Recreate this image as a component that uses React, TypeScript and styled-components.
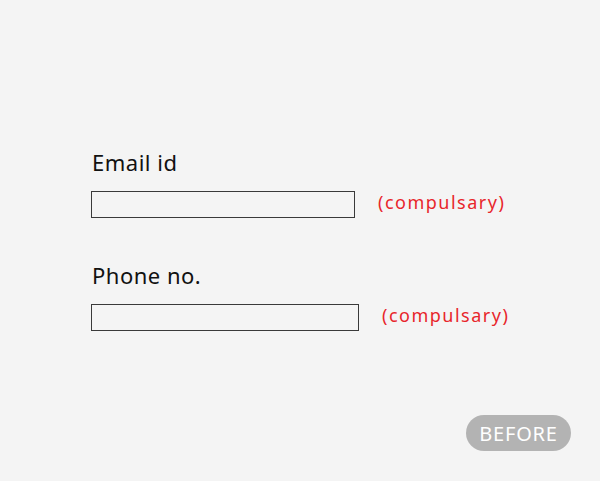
import React from "react";
import styled, { createGlobalStyle } from "styled-components";

const GlobalStyle = createGlobalStyle`
  html, body {
    margin: 0;
    padding: 0;
    background: #f4f4f4;
  }
  body {
    font-family: "Noto Sans", "Open Sans", sans-serif;
  }
`;

const Page = styled.div`
  position: relative;
  width: 600px;
  height: 481px;
  background: #f4f4f4;
  box-sizing: border-box;
  padding: 146px 0 0 91px;
  overflow: hidden;
`;

const Form = styled.div`
  display: flex;
  flex-direction: column;
  gap: 41px;
`;

const Field = styled.div`
  display: flex;
  flex-direction: column;
  gap: 12px;
`;

const Label = styled.label`
  font-size: 22px;
  font-weight: 400;
  color: #111;
  padding-left: 1px;
  line-height: 33px;
  letter-spacing: 0.5px;
`;

const Row = styled.div`
  display: flex;
  align-items: center;
  gap: 23px;
`;

const Input = styled.input<{ $width: number }>`
  width: ${(p) => p.$width}px;
  height: 27px;
  box-sizing: border-box;
  border: 1px solid #3a3a3a;
  background: #f4f4f4;
  margin: 0;
  padding: 0 6px;
  outline: none;
`;

const Hint = styled.span`
  color: #e8262b;
  font-size: 18px;
  font-weight: 400;
  letter-spacing: 1.5px;
  line-height: 24px;
  margin-top: -6px;
`;

const Badge = styled.div`
  position: absolute;
  left: 466px;
  top: 415px;
  width: 105px;
  height: 36px;
  border-radius: 18px;
  background: #b3b3b3;
  color: #fff;
  font-size: 20px;
  display: flex;
  align-items: center;
  justify-content: center;
  letter-spacing: 0.8px;
`;

export default function App() {
  return (
    <>
      <GlobalStyle />
      <Page>
        <Form>
          <Field>
            <Label>Email id</Label>
            <Row>
              <Input $width={264} />
              <Hint>(compulsary)</Hint>
            </Row>
          </Field>
          <Field>
            <Label>Phone no.</Label>
            <Row>
              <Input $width={268} />
              <Hint>(compulsary)</Hint>
            </Row>
          </Field>
        </Form>
        <Badge>BEFORE</Badge>
      </Page>
    </>
  );
}
